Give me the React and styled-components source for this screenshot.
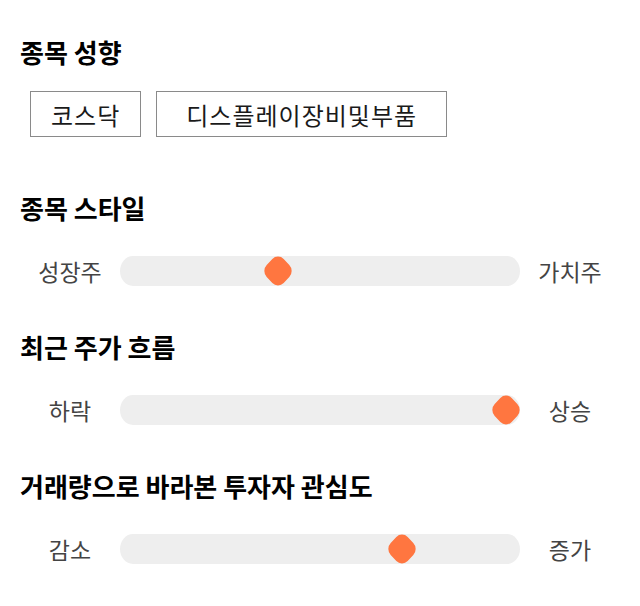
import React from "react";
import styled, { createGlobalStyle } from "styled-components";

const GlobalStyle = createGlobalStyle`
  body {
    margin: 0;
    background: #ffffff;
    font-family: "Noto Sans CJK KR", "Noto Sans", sans-serif;
  }
`;

const Page = styled.div`
  padding: 36px 20px 0;
  display: flex;
  flex-direction: column;
`;

const Section = styled.section`
  margin-top: ${(p) => (p.$first ? "0" : "45px")};
`;

const Title = styled.h2`
  margin: 0;
  font-size: 26px;
  line-height: 32px;
  font-weight: 700;
  color: #000;
`;

const ChipRow = styled.div`
  display: flex;
  gap: 15px;
  margin: 23px 0 10px 10px;
`;

const Chip = styled.div`
  height: 46px;
  box-sizing: border-box;
  padding: 0 ${(p) => p.$pad || 20}px;
  border: 1px solid #8a8a8a;
  display: flex;
  align-items: center;
  font-size: 24px;
  letter-spacing: 1px;
  color: #1a1a1a;
`;

const SliderRow = styled.div`
  display: grid;
  grid-template-columns: 100px 1fr 100px;
  align-items: center;
  margin-top: 32px;
`;

const Label = styled.span`
  text-align: center;
  font-size: 23px;
  line-height: 30px;
  color: #444;
`;

const Track = styled.div`
  position: relative;
  height: 30px;
  background: #eeeeee;
  border-radius: 13px / 15px;
`;

const Thumb = styled.div`
  position: absolute;
  top: 50%;
  width: 24px;
  height: 24px;
  margin-left: -12px;
  margin-top: -12px;
  background: #ff7640;
  border-radius: 8px;
  transform: scaleY(1.06) rotate(45deg);
`;

const sliders = [
  { title: "종목 스타일", left: "성장주", right: "가치주", value: 0.388 },
  { title: "최근 주가 흐름", left: "하락", right: "상승", value: 1 },
  { title: "거래량으로 바라본 투자자 관심도", left: "감소", right: "증가", value: 0.72 },
];

export default function App() {
  return (
    <>
      <GlobalStyle />
      <Page>
        <Section $first>
          <Title>종목 성향</Title>
          <ChipRow>
            <Chip>코스닥</Chip>
            <Chip $pad={29}>디스플레이장비및부품</Chip>
          </ChipRow>
        </Section>
        {sliders.map((s) => (
          <Section key={s.title}>
            <Title>{s.title}</Title>
            <SliderRow>
              <Label>{s.left}</Label>
              <Track>
                <Thumb style={{ left: `calc(14px + (100% - 28px) * ${s.value})` }} />
              </Track>
              <Label>{s.right}</Label>
            </SliderRow>
          </Section>
        ))}
      </Page>
    </>
  );
}
